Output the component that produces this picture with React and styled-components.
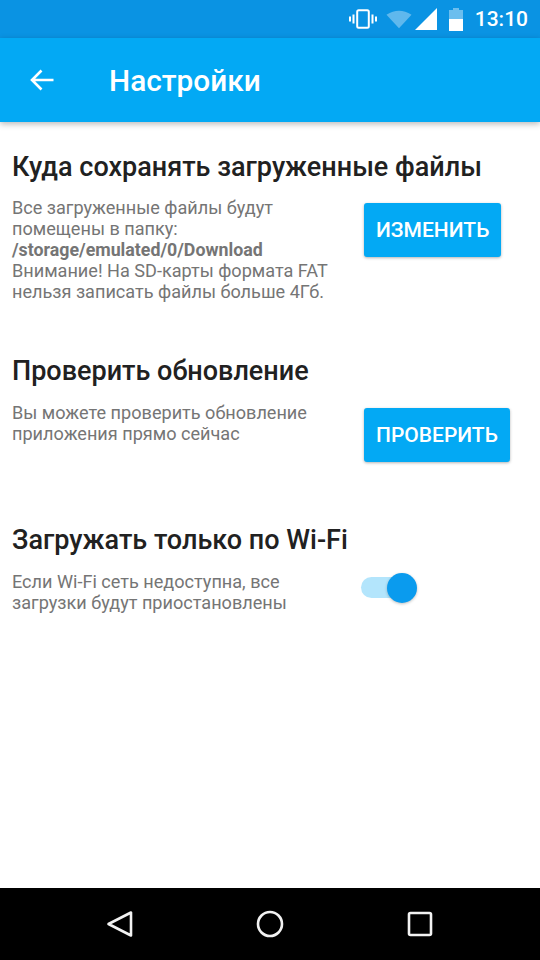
import React from 'react';
import styled, { createGlobalStyle } from 'styled-components';

const GlobalStyle = createGlobalStyle`
  html, body {
    margin: 0;
    padding: 0;
    background: #fff;
    font-family: Roboto, "Noto Sans", sans-serif;
  }
  * {
    box-sizing: border-box;
  }
`;

const App = () => {
  return (
    <Screen>
      <GlobalStyle />
      <StatusBar>
        <StatusIcon width="28" height="20" viewBox="0 0 28 20">
          <rect x="8.2" y="1.2" width="11.6" height="17.6" rx="1.5" fill="none" stroke="#fff" strokeWidth="2" />
          <path d="M4.5 5.5v9M1 7.5v5M23.5 5.5v9M27 7.5v5" fill="none" stroke="#fff" strokeWidth="2" />
        </StatusIcon>
        <StatusIcon $gap={9} width="26" height="20" viewBox="0 0 28 20">
          <path d="M0.5 5.5Q14 -3.5 27.5 5.5L14 20z" fill="#fff" fillOpacity="0.35" />
        </StatusIcon>
        <StatusIcon $gap={3} width="22" height="22" viewBox="0 0 22 22">
          <path d="M0 22L22 0v22z" fill="#fff" />
        </StatusIcon>
        <StatusIcon $gap={12} width="14" height="23" viewBox="0 0 14 23">
          <path d="M4 0h6v2h4v9H0V2h4z" fill="#fff" fillOpacity="0.4" />
          <path d="M0 11h14v12H0z" fill="#fff" />
        </StatusIcon>
        <Clock>13:10</Clock>
      </StatusBar>
      <AppBar>
        <BackButton>
          <svg width="26" height="24" viewBox="0 0 26 24">
            <path d="M24.5 12H3M12.5 2.5L3 12l9.5 9.5" fill="none" stroke="#fff" strokeWidth="2.6" />
          </svg>
        </BackButton>
        <Title>Настройки</Title>
      </AppBar>
      <Content>
        <Section $height={204}>
          <Heading $gap={14}>Куда сохранять загруженные файлы</Heading>
          <Row>
            <Description>
              Все загруженные файлы будут помещены в папку:
              <br />
              <b>/storage/emulated/0/Download</b>
              <br />
              Внимание! На SD-карты формата FAT нельзя записать файлы больше 4Гб.
            </Description>
            <ActionButton>ИЗМЕНИТЬ</ActionButton>
          </Row>
        </Section>
        <Section $height={169}>
          <Heading>Проверить обновление</Heading>
          <Row>
            <Description>Вы можете проверить обновление приложения прямо сейчас</Description>
            <ActionButton>ПРОВЕРИТЬ</ActionButton>
          </Row>
        </Section>
        <Section>
          <Heading>Загружать только по Wi-Fi</Heading>
          <Row>
            <Description>Если Wi-Fi сеть недоступна, все загрузки будут приостановлены</Description>
            <Switch>
              <SwitchTrack />
              <SwitchThumb />
            </Switch>
          </Row>
        </Section>
      </Content>
      <NavBar>
        <svg width="28" height="28" viewBox="0 0 28 28">
          <path d="M2.5 14L25 2.5v23z" fill="none" stroke="#f2f2f2" strokeWidth="2.6" strokeLinejoin="round" />
        </svg>
        <svg width="28" height="28" viewBox="0 0 28 28">
          <circle cx="14" cy="14" r="12" fill="none" stroke="#f2f2f2" strokeWidth="2.6" />
        </svg>
        <svg width="28" height="28" viewBox="0 0 28 28">
          <rect x="3" y="3" width="22" height="22" rx="1.5" fill="none" stroke="#f2f2f2" strokeWidth="2.6" />
        </svg>
      </NavBar>
    </Screen>
  );
};

export default App;

const Screen = styled.div`
  display: flex;
  flex-direction: column;
  width: 540px;
  height: 960px;
  overflow: hidden;
  background: #fff;
`;

const StatusBar = styled.div`
  display: flex;
  align-items: center;
  justify-content: flex-end;
  height: 38px;
  padding-right: 12px;
  background: #0a93e3;
  color: #fff;
`;

const StatusIcon = styled.svg`
  margin-left: ${props => props.$gap || 0}px;
`;

const Clock = styled.span`
  margin-left: 12px;
  font-size: 21px;
  font-weight: 500;
`;

const AppBar = styled.header`
  position: relative;
  z-index: 1;
  display: flex;
  align-items: center;
  height: 84px;
  background: #03a9f4;
  box-shadow: 0 2px 6px rgba(0, 0, 0, 0.28);
`;

const BackButton = styled.div`
  display: flex;
  width: 109px;
  padding-left: 29px;
`;

const Title = styled.h1`
  margin: 0;
  color: #fff;
  font-size: 29.8px;
  font-weight: 500;
`;

const Content = styled.main`
  flex: 1;
  padding: 29px 12px 0;
`;

const Section = styled.section`
  height: ${props => (props.$height ? `${props.$height}px` : 'auto')};
`;

const Heading = styled.h2`
  margin: 0 0 ${props => props.$gap || 15}px;
  color: #212121;
  font-size: 27px;
  line-height: 32px;
  font-weight: 500;
`;

const Row = styled.div`
  display: flex;
  align-items: flex-start;
`;

const Description = styled.p`
  width: 352px;
  margin: 0;
  padding-right: 12px;
  color: #757575;
  font-size: 18.1px;
  line-height: 21px;

  b {
    font-size: 17.8px;
    font-weight: 700;
  }
`;

const ActionButton = styled.button`
  height: 54px;
  margin-top: 6px;
  padding: 0 12px;
  border: 0;
  border-radius: 3px;
  background: #03a9f4;
  box-shadow: 0 1px 3px rgba(0, 0, 0, 0.3);
  color: #fff;
  font-family: inherit;
  font-size: 21px;
  font-weight: 500;
`;

const Switch = styled.div`
  position: relative;
  width: 58px;
  height: 30px;
  margin-top: 2px;
  margin-left: -5px;
`;

const SwitchTrack = styled.div`
  position: absolute;
  top: 4px;
  left: 2px;
  width: 50px;
  height: 21px;
  border-radius: 11px;
  background: #b3e5fc;
`;

const SwitchThumb = styled.div`
  position: absolute;
  top: 0;
  right: 0;
  width: 30px;
  height: 30px;
  border-radius: 50%;
  background: #0a9bee;
  box-shadow: 0 1px 3px rgba(0, 0, 0, 0.25);
`;

const NavBar = styled.nav`
  display: flex;
  align-items: center;
  justify-content: center;
  gap: 122px;
  height: 72px;
  background: #000;
`;
